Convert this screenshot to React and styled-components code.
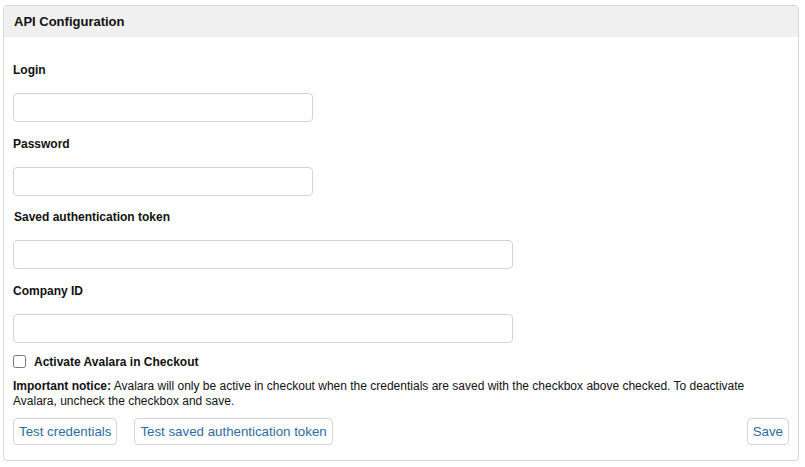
import React, { useState } from 'react'
import styled, { createGlobalStyle } from 'styled-components'

const GlobalStyle = createGlobalStyle`
  body {
    margin: 0;
    background: #ffffff;
    font-family: "Liberation Sans", Arial, sans-serif;
    color: #111;
  }
`

const Page = styled.div`
  padding: 5px 6px 0 3px;
`

const Panel = styled.section`
  border: 1px solid #d6d6d6;
  border-radius: 4px;
  background: #fff;
  height: 456px;
  box-sizing: border-box;
  overflow: hidden;
`

const Header = styled.div`
  height: 31px;
  background: #f0f0f0;
  display: flex;
  align-items: center;
  padding: 0 10px;
  font-size: 13px;
  font-weight: bold;
  color: #111;
`

const Body = styled.div`
  padding: 26px 9px 0 9px;
`

const Field = styled.div`
  margin-bottom: 14.7px;
`

const Label = styled.label`
  display: block;
  font-size: 12px;
  font-weight: bold;
  line-height: 14px;
  margin: 0 0 16px ${props => props.$shift || 0}px;
`

const Input = styled.input`
  display: block;
  box-sizing: border-box;
  width: ${props => props.$wide ? 500 : 300}px;
  height: 29px;
  border: 1px solid #d4d4d4;
  border-radius: 4px;
  padding: 0 8px;
  font-family: inherit;
  font-size: 12px;
  outline: none;
`

const CheckRow = styled.label`
  display: flex;
  align-items: center;
  gap: 8px;
  margin-top: -3px;
  font-size: 12px;
  font-weight: bold;
  line-height: 14px;

  input {
    margin: 0;
    width: 13px;
    height: 13px;
  }
`

const Notice = styled.p`
  margin: 10px 0 0 0;
  font-size: 12px;
  line-height: 15px;
  color: #111;

  b {
    font-weight: bold;
  }
`

const ButtonBar = styled.div`
  display: flex;
  gap: 17px;
  margin-top: 9px;
`

const Button = styled.button`
  height: 27px;
  padding: 0 5px;
  background: #fff;
  border: 1px solid #d4d4d4;
  border-radius: 4px;
  color: #2d6ca2;
  font-family: inherit;
  font-size: 13.3px;
  cursor: pointer;
  margin-left: ${props => props.$push ? 'auto' : '0'};
`

export default function App() {
  const [active, setActive] = useState(false)

  return (
    <Page>
      <GlobalStyle />
      <Panel>
        <Header>API Configuration</Header>
        <Body>
          <Field>
            <Label>Login</Label>
            <Input type="text" />
          </Field>
          <Field>
            <Label>Password</Label>
            <Input type="password" />
          </Field>
          <Field>
            <Label $shift={1}>Saved authentication token</Label>
            <Input type="text" $wide />
          </Field>
          <Field>
            <Label>Company ID</Label>
            <Input type="text" $wide />
          </Field>
          <CheckRow>
            <input type="checkbox" checked={active} onChange={(e) => setActive(e.target.checked)} />
            Activate Avalara in Checkout
          </CheckRow>
          <Notice>
            <b>Important notice:</b> Avalara will only be active in checkout when the credentials are saved with the checkbox above checked. To deactivate Avalara, uncheck the checkbox and save.
          </Notice>
          <ButtonBar>
            <Button>Test credentials</Button>
            <Button>Test saved authentication token</Button>
            <Button $push>Save</Button>
          </ButtonBar>
        </Body>
      </Panel>
    </Page>
  )
}
